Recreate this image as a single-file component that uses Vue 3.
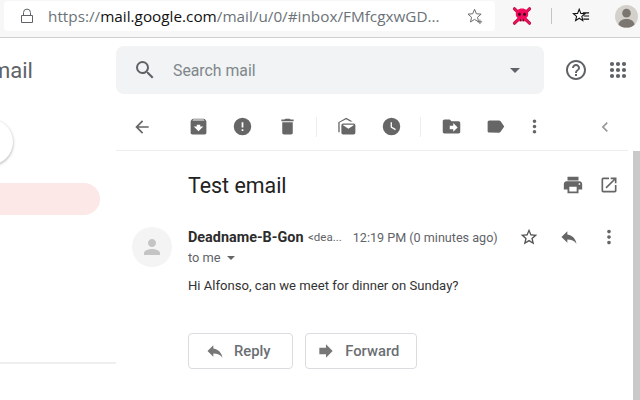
<template>
  <div class="page">
    <header class="browser-bar">
      <div class="url-box">
        <svg class="lock" viewBox="0 0 16 16" width="16" height="16"><path d="M4.5 7V4.6a3.5 3.5 0 0 1 7 0V7M2.5 7.5h11v7h-11z" fill="none" stroke="#5f6368" stroke-width="1"/></svg>
        <span class="url"><span class="dim">https://</span>mail.google.com<span class="dim">/mail/u/0/#inbox/FMfcgxwGD...</span></span>
        <svg class="star-add" viewBox="0 0 20 20" width="18" height="18"><path d="M9.5 2.5l2 5 5.3.4-4 3.5 1.2 5.2-4.5-2.8-4.5 2.8 1.2-5.2-4-3.5 5.3-.4z" fill="none" stroke="#6a6a6a" stroke-width="1.1"/><path d="M15.5 14v5M13 16.500h5" stroke="#6a6a6a" stroke-width="1.1"/></svg>
      </div>
      <svg class="skull" viewBox="0 0 20 20" width="20" height="20">
        <path d="M2.500 2.800l15 14.400M17.500 2.800l-15 14.400" stroke="#b0103f" stroke-width="3.200" stroke-linecap="round"/>
        <path d="M2.500 2.800l15 14.400M17.500 2.800l-15 14.400" stroke="#f0105a" stroke-width="1.800" stroke-linecap="round"/>
        <path d="M10 2.500c3.900 0 6.200 2.400 6.200 5.500 0 2.100-1 3.500-2.400 4.300v2.900H6.200v-2.900C4.800 11.500 3.800 10.100 3.800 8c0-3.100 2.300-5.500 6.200-5.500z" fill="#f40a5c"/>
        <circle cx="7.500" cy="8.300" r="1.500" fill="#3a0a1a"/><circle cx="12.500" cy="8.300" r="1.500" fill="#3a0a1a"/>
        <path d="M8 13.200h1v2H8zM11 13.200h1v2h-1z" fill="#3a0a1a"/>
      </svg>
      <span class="bar-sep"></span>
      <svg class="favs" viewBox="0 0 20 20" width="18" height="18"><path d="M8 2.500l1.800 4.600 4.700.3-3.600 3 1.100 4.700L8 12.500l-4 2.600 1.100-4.700-3.600-3 4.700-.3z" fill="#fff" stroke="#111" stroke-width="1.200"/><path d="M12 6.500h7M13 10h6M12.500 13.500H19" stroke="#111" stroke-width="1.200"/></svg>
      <span class="profile">
        <svg viewBox="0 0 24 24" width="24" height="24"><circle cx="12" cy="9" r="4.500" fill="#7b7670"/><path d="M3.500 21c1-4.500 4.500-6 8.500-6s7.500 1.500 8.500 6c-2 2-5 3-8.500 3s-6.500-1-8.500-3z" fill="#7b7670"/></svg>
      </span>
    </header>

    <div class="app">
      <aside class="sidebar">
        <div class="brand">mail</div>
        <div class="compose"></div>
        <div class="inbox-pill"></div>
        <div class="side-rule"></div>
      </aside>

      <main class="content">
        <div class="top-row">
          <div class="search">
            <svg viewBox="0 0 24 24" width="24" height="24"><path :d="icons.search" fill="#5f6368"/></svg>
            <span class="search-text">Search mail</span>
            <span class="caret"></span>
          </div>
          <svg class="help" viewBox="0 0 24 24" width="24" height="24"><path :d="icons.help" fill="#5f6368"/></svg>
          <svg class="apps" viewBox="0 0 24 24" width="24" height="24"><path :d="icons.apps" fill="none" stroke="#5f6368" stroke-width="4.200" stroke-linecap="round"/></svg>
        </div>

        <div class="toolbar">
          <svg class="tb-back" viewBox="0 0 24 24" width="20" height="20"><path :d="icons.back" fill="#666"/></svg>
          <span class="tb-group">
            <svg v-for="n in ['archive', 'spam', 'trash']" :key="n" class="tb-icon" viewBox="0 0 24 24"><path :d="icons[n]" fill="#666"/></svg>
          </span>
          <span class="tb-sep"></span>
          <span class="tb-group tb-group-mid">
            <svg v-for="n in ['markRead', 'snooze']" :key="n" class="tb-icon" viewBox="0 0 24 24"><path :d="icons[n]" fill="#666"/></svg>
          </span>
          <span class="tb-sep"></span>
          <span class="tb-group tb-group-end">
            <svg v-for="n in ['move', 'label', 'more']" :key="n" class="tb-icon" viewBox="0 0 24 24"><path :d="icons[n]" fill="#666"/></svg>
          </span>
          <svg class="tb-chevron" viewBox="0 0 24 24" width="20" height="20"><path :d="icons.chevron" fill="#999"/></svg>
        </div>

        <div class="pane">
          <div class="mail">
            <div class="subject-row">
              <h1 class="subject">Test email</h1>
              <svg viewBox="0 0 24 24" width="22" height="22"><path :d="icons.print" fill="#666"/></svg>
              <svg viewBox="0 0 24 24" width="20" height="20"><path :d="icons.popout" fill="#666"/></svg>
            </div>

            <div class="msg">
              <div class="avatar">
                <svg viewBox="0 0 24 24" width="24" height="24"><path :d="icons.person" fill="#c4c4c4"/></svg>
              </div>
              <div class="msg-body">
                <div class="from-row">
                  <strong class="from">Deadname-B-Gon</strong>
                  <span class="addr">&lt;dea...</span>
                  <span class="time">12:19 PM (0 minutes ago)</span>
                  <svg class="act-star" viewBox="0 0 24 24" width="20" height="20"><path :d="icons.star" fill="#555"/></svg>
                  <svg class="act-reply" viewBox="0 0 24 24" width="20" height="20"><path :d="icons.reply" fill="#666"/></svg>
                  <svg class="act-more" viewBox="0 0 24 24" width="22" height="22"><path :d="icons.more" fill="#666"/></svg>
                </div>
                <div class="to-row">to me <span class="to-caret"></span></div>
                <p class="text">Hi Alfonso, can we meet for dinner on Sunday?</p>
                <div class="buttons">
                  <button class="btn reply-btn">
                    <svg viewBox="0 0 24 24" width="20" height="20"><path :d="icons.reply" fill="#777"/></svg>
                    Reply
                  </button>
                  <button class="btn forward-btn">
                    <svg viewBox="0 0 24 24" width="20" height="20"><path :d="icons.forward" fill="#777"/></svg>
                    Forward
                  </button>
                </div>
              </div>
            </div>
          </div>
          <div class="scrollbar"></div>
        </div>
      </main>
    </div>
  </div>
</template>

<script setup>
const icons = {
  search: 'M15.5 14h-.79l-.28-.27A6.47 6.47 0 0 0 16 9.500 6.500 6.500 0 1 0 9.500 16c1.610 0 3.090-.59 4.230-1.570l.27.28v.79l5 4.990L20.490 19l-4.990-5zm-6 0C7.010 14 5 11.990 5 9.500S7.010 5 9.500 5 14 7.010 14 9.500 11.990 14 9.500 14z',
  help: 'M11 18h2v-2h-2v2zm1-16C6.480 2 2 6.480 2 12s4.480 10 10 10 10-4.480 10-10S17.520 2 12 2zm0 18c-4.410 0-8-3.590-8-8s3.590-8 8-8 8 3.590 8 8-3.590 8-8 8zm0-14c-2.210 0-4 1.790-4 4h2c0-1.100.9-2 2-2s2 .9 2 2c0 2-3 1.750-3 5h2c0-2.250 3-2.500 3-5 0-2.210-1.790-4-4-4z',
  apps: 'M6 6h.01M12 6h.01M18 6h.01M6 12h.01M12 12h.01M18 12h.01M6 18h.01M12 18h.01M18 18h.01',
  back: 'M20 11H7.830l5.590-5.590L12 4l-8 8 8 8 1.410-1.410L7.830 13H20v-2z',
  archive: 'M20.540 5.230l-1.390-1.680C18.880 3.210 18.470 3 18 3H6c-.47 0-.88.21-1.160.55L3.460 5.230C3.170 5.570 3 6.020 3 6.500V19c0 1.100.9 2 2 2h14c1.100 0 2-.9 2-2V6.500c0-.48-.17-.93-.46-1.270zM12 17.500L6.500 12H10v-2h4v2h3.500L12 17.500zM5.120 5l.81-1h12l.94 1H5.120z',
  spam: 'M12 2a10 10 0 1 0 0 20 10 10 0 0 0 0-20zm1 15h-2v-2h2v2zm0-4h-2V7h2v6z',
  trash: 'M6 19c0 1.100.9 2 2 2h8c1.100 0 2-.9 2-2V7H6v12zM19 4h-3.500l-1-1h-5l-1 1H5v2h14V4z',
  markRead: 'M21 8.500V19a2 2 0 0 1-2 2H7a2 2 0 0 1-2-2v-8.500a2 2 0 0 1 2-2h12a2 2 0 0 1 2 2zM7 10.500l6 4 6-4V10H7v.5zM3 7.500v11H1.500V7l9-5 7.500 4.200h-3L10.500 3.700 3 7.500z',
  snooze: 'M12 2a10 10 0 1 0 0 20 10 10 0 0 0 0-20zm4.200 14.200L11 13V7h1.500v5.200l4.500 2.700-.8 1.300z',
  move: 'M20 6h-8l-2-2H4c-1.100 0-2 .9-2 2v12c0 1.100.9 2 2 2h16c1.100 0 2-.9 2-2V8c0-1.100-.9-2-2-2zm-6 12v-3h-4v-4h4V8l5 5-5 5z',
  label: 'M17.630 5.840C17.270 5.330 16.670 5 16 5L5 5.010C3.900 5.010 3 5.900 3 7v10c0 1.100.9 1.990 2 1.990L16 19c.67 0 1.270-.33 1.630-.84L22 12l-4.370-6.160z',
  more: 'M12 8c1.100 0 2-.9 2-2s-.9-2-2-2-2 .9-2 2 .9 2 2 2zm0 2c-1.100 0-2 .9-2 2s.9 2 2 2 2-.9 2-2-.9-2-2-2zm0 6c-1.100 0-2 .9-2 2s.9 2 2 2 2-.9 2-2-.9-2-2-2z',
  chevron: 'M15.410 7.410L14 6l-6 6 6 6 1.410-1.410L10.830 12z',
  print: 'M19 8H5c-1.660 0-3 1.340-3 3v6h4v4h12v-4h4v-6c0-1.660-1.340-3-3-3zm-3 11H8v-5h8v5zm3-7c-.55 0-1-.45-1-1s.45-1 1-1 1 .45 1 1-.45 1-1 1zm-1-9H6v4h12V3z',
  popout: 'M19 19H5V5h7V3H5a2 2 0 0 0-2 2v14a2 2 0 0 0 2 2h14c1.100 0 2-.9 2-2v-7h-2v7zM14 3v2h3.590l-9.830 9.830 1.410 1.410L19 6.410V10h2V3h-7z',
  person: 'M12 12c2.210 0 4-1.790 4-4s-1.790-4-4-4-4 1.790-4 4 1.790 4 4 4zm0 2c-2.670 0-8 1.340-8 4v2h16v-2c0-2.660-5.330-4-8-4z',
  star: 'M22 9.240l-7.190-.62L12 2 9.190 8.630 2 9.240l5.460 4.730L5.820 21 12 17.270 18.180 21l-1.630-7.030L22 9.240zM12 15.400l-3.760 2.270 1-4.280-3.320-2.880 4.380-.38L12 6.100l1.710 4.040 4.380.38-3.320 2.880 1 4.280L12 15.400z',
  reply: 'M10 9V5l-7 7 7 7v-4.100c5 0 8.500 1.600 11 5.100-1-5-4-10-11-11z',
  forward: 'M12 8V4l8 8-8 8v-4H4V8z'
}
</script>

<style scoped>
.page {
  width: 640px;
  height: 400px;
  overflow: hidden;
  display: flex;
  flex-direction: column;
  background: #fff;
  font-family: Roboto, "Liberation Sans", sans-serif;
  color: #222;
}
.browser-bar {
  height: 37px;
  flex: none;
  display: flex;
  align-items: center;
  background: #f7f7f7;
  border-bottom: 1px solid #cfcfcf;
}
.url-box {
  width: 491px;
  height: 30px;
  margin: -5px 0 0 4px;
  padding: 0 11px 0 15px;
  box-sizing: border-box;
  display: flex;
  align-items: center;
  background: #fff;
  border-radius: 4px;
}
.lock { flex: none; }
.url {
  flex: 1;
  margin-left: 13px;
  font-family: "Open Sans", sans-serif;
  font-size: 15.300px;
  color: #111;
  white-space: nowrap;
  overflow: hidden;
}
.star-add { flex: none; }
.dim { color: #6b7278; }
.skull { margin-left: 17px; margin-top: -5px; }
.bar-sep { width: 1px; height: 16px; margin: -5px 0 0 19px; background: #c4c4c4; }
.favs { margin: -5px 0 0 20px; }
.profile {
  width: 23px;
  height: 23px;
  margin: -5px 0 0 25px;
  border-radius: 50%;
  background: #d4d1cc;
  overflow: hidden;
  display: flex;
  align-items: center;
  justify-content: center;
}
.app { flex: 1; display: flex; min-height: 0; }
.sidebar { width: 116px; flex: none; display: flex; flex-direction: column; }
.brand {
  height: 24px;
  margin: 21px 0 0 -9px;
  font-size: 22px;
  line-height: 24px;
  color: #5f6368;
}
.compose {
  width: 46px;
  height: 46px;
  margin: 36px 0 0 -33px;
  border-radius: 50%;
  background: #fff;
  box-shadow: 0 1px 3px rgba(60, 64, 67, .45);
}
.inbox-pill {
  width: 100px;
  height: 32px;
  margin-top: 18px;
  background: #fce8e6;
  border-radius: 0 16px 16px 0;
}
.side-rule { height: 2px; margin-top: 147px; background: #efefef; }
.content { flex: 1; display: flex; flex-direction: column; min-width: 0; }
.top-row { height: 65px; flex: none; display: flex; align-items: flex-start; padding-top: 8px; box-sizing: border-box; }
.search {
  width: 428px;
  height: 48px;
  padding: 0 17px;
  box-sizing: border-box;
  display: flex;
  align-items: center;
  background: #f1f3f4;
  border-radius: 8px;
}
.search-text { flex: 1; margin-left: 16px; font-size: 15.800px; color: #80868b; }
.caret { width: 0; height: 0; border: 5px solid transparent; border-top-color: #5f6368; border-bottom: 0; margin-right: 7px; }
.help { margin: 12px 0 0 20px; }
.apps { margin: 12px 0 0 18px; }
.toolbar {
  height: 48px;
  width: 512px;
  flex: none;
  padding-left: 16px;
  box-sizing: border-box;
  display: flex;
  align-items: center;
  border-bottom: 1px solid #eee;
}
.tb-back { flex: none; }
.tb-group { display: flex; gap: 23.500px; }
.tb-group-mid { gap: 23px; }
.tb-back + .tb-group { margin-left: 35.500px; }
.tb-icon { width: 21px; height: 21px; flex: none; }
.tb-group-end .tb-icon:last-child { margin-left: -6px; }
.tb-sep { width: 1px; height: 20px; background: #eee; margin: 0 20px 0 18px; }
.tb-chevron { margin-left: 50px; }
.pane { flex: 1; display: flex; min-height: 0; }
.mail { width: 512px; flex: none; padding-left: 16px; box-sizing: border-box; }
.scrollbar { width: 7px; margin-left: 5px; background: #c9c9c9; }
.subject-row { height: 68px; display: flex; align-items: center; padding: 0 9px 0 56px; gap: 15px; }
.subject { flex: 1; margin: 0; font-size: 21.400px; font-weight: 400; color: #222; }
.msg { display: flex; }
.avatar {
  width: 40px;
  height: 40px;
  flex: none;
  margin-top: 8px;
  border-radius: 50%;
  background: #f4f4f4;
  display: flex;
  align-items: center;
  justify-content: center;
}
.msg-body { margin-left: 16px; flex: 1; min-width: 0; }
.from-row { display: flex; align-items: center; height: 36px; white-space: nowrap; }
.from { font-size: 14.400px; font-weight: 700; color: #2c2c2c; }
.addr { margin-left: 4.500px; font-size: 11.500px; color: #5f6368; }
.time { margin-left: 11px; font-size: 12.600px; color: #5f6368; }
.act-star { margin-left: 21px; }
.act-reply { margin-left: 20px; }
.act-more { margin-left: 19px; }
.to-row { display: flex; align-items: center; gap: 6px; margin-top: -5px; font-size: 12.800px; line-height: 16px; color: #5f6368; }
.to-caret { width: 0; height: 0; border: 4px solid transparent; border-top-color: #666; border-bottom: 0; }
.text { margin: 12px 0 0; font-size: 13.100px; line-height: 16px; color: #333; }
.buttons { display: flex; gap: 12px; margin-top: 39px; }
.btn {
  height: 36px;
  padding: 0;
  display: flex;
  align-items: center;
  gap: 9.500px;
  background: #fff;
  border: 1px solid #dadce0;
  border-radius: 4px;
  font-family: Roboto, sans-serif;
  font-size: 14.800px;
  font-weight: 500;
  color: #6b6f73;
}
.reply-btn { width: 105px; padding-left: 15.500px; }
.forward-btn { width: 112px; padding-left: 9.700px; }
</style>

<style>
html, body { margin: 0; background: #fff; }
</style>
